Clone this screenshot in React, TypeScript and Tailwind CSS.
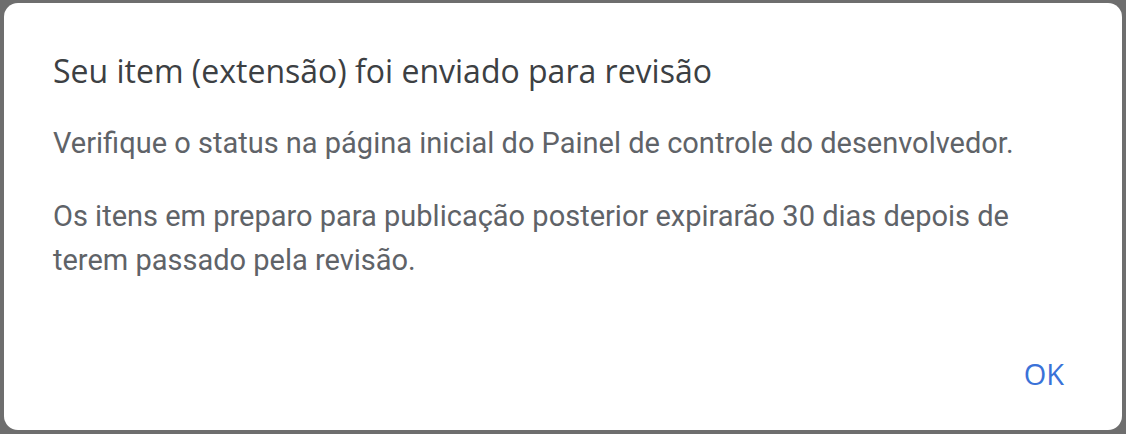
import React from "react";

export default function App() {
  return (
    <div className="h-[434px] w-[1126px] bg-[#6e6e6e] pt-[3px] pl-[4px] pr-[4px] pb-[4px]">
      <div className="flex h-full w-full flex-col rounded-[14px] bg-white pl-[49px] pr-[57px]">
        <h1
          className="mt-[48px] text-[32px] leading-[40px] font-normal text-[#3c4043]"
          style={{ fontFamily: '"Open Sans", Roboto, sans-serif' }}
        >
          Seu item (extensão) foi enviado para revisão
        </h1>
        <div
          className="mt-[30px] text-[29px] leading-[44px] text-[#5f6368]"
          style={{ fontFamily: 'Roboto, "Noto Sans", sans-serif' }}
        >
          <p>Verifique o status na página inicial do Painel de controle do desenvolvedor.</p>
          <p className="mt-[29px]">
            Os itens em preparo para publicação posterior expirarão 30 dias depois de terem passado pela revisão.
          </p>
        </div>
        <div className="mt-auto mb-[40px] flex justify-end pr-[1px]">
          <button
            className="text-[29px] font-medium text-[#3a72d8] leading-[32px]"
            style={{ fontFamily: '"Open Sans", Roboto, sans-serif' }}
          >
            OK
          </button>
        </div>
      </div>
    </div>
  );
}
